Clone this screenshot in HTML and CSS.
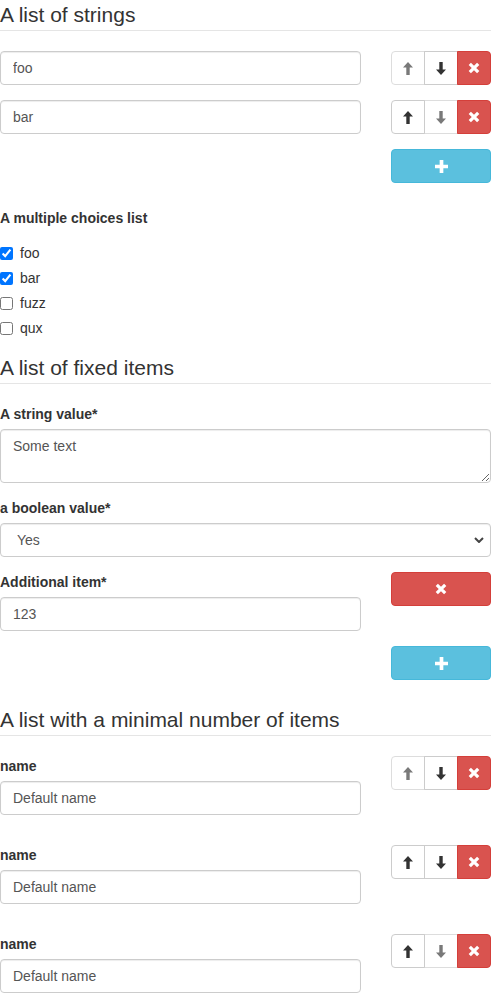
FILE: index.html
```html
<!DOCTYPE html>
<html>
<head>
<meta charset="utf-8">
<link rel="stylesheet" href="styles.css">
</head>
<body>
<div class="page">

  <section class="section">
    <div class="legend">A list of strings</div>
    <div class="array-item">
      <div class="item-main"><input class="form-control" type="text" value="foo"></div>
      <div class="btn-group">
        <button class="btn btn-default" disabled><svg class="ico-arrow" viewBox="0 0 10 13"><path d="M5 0 L10 5.4 L6.7 5.4 L6.7 13 L3.3 13 L3.3 5.4 L0 5.4 Z"/></svg></button>
        <button class="btn btn-default"><svg class="ico-arrow" viewBox="0 0 10 13"><path d="M5 13 L10 7.6 L6.7 7.6 L6.7 0 L3.3 0 L3.3 7.6 L0 7.6 Z"/></svg></button>
        <button class="btn btn-danger"><svg class="ico-x" viewBox="0 0 12 12"><path d="M1.8 1.8 L10.2 10.2 M10.2 1.8 L1.8 10.2"/></svg></button>
      </div>
    </div>
    <div class="array-item">
      <div class="item-main"><input class="form-control" type="text" value="bar"></div>
      <div class="btn-group">
        <button class="btn btn-default"><svg class="ico-arrow" viewBox="0 0 10 13"><path d="M5 0 L10 5.4 L6.7 5.4 L6.7 13 L3.3 13 L3.3 5.4 L0 5.4 Z"/></svg></button>
        <button class="btn btn-default" disabled><svg class="ico-arrow" viewBox="0 0 10 13"><path d="M5 13 L10 7.6 L6.7 7.6 L6.7 0 L3.3 0 L3.3 7.6 L0 7.6 Z"/></svg></button>
        <button class="btn btn-danger"><svg class="ico-x" viewBox="0 0 12 12"><path d="M1.8 1.8 L10.2 10.2 M10.2 1.8 L1.8 10.2"/></svg></button>
      </div>
    </div>
    <div class="array-add">
      <button class="btn btn-info btn-add"><svg class="ico-plus" viewBox="0 0 12 12"><path d="M6 0 V12 M0 6 H12"/></svg></button>
    </div>
  </section>

  <div class="field">
    <label class="control-label">A multiple choices list</label>
    <div class="checkboxes">
      <label class="checkbox"><input type="checkbox" checked><span>foo</span></label>
      <label class="checkbox"><input type="checkbox" checked><span>bar</span></label>
      <label class="checkbox"><input type="checkbox"><span>fuzz</span></label>
      <label class="checkbox"><input type="checkbox"><span>qux</span></label>
    </div>
  </div>

  <section class="section">
    <div class="legend">A list of fixed items</div>
    <div class="field">
      <label class="control-label">A string value*</label>
      <textarea class="form-control textarea">Some text</textarea>
    </div>
    <div class="field">
      <label class="control-label">a boolean value*</label>
      <div class="select-wrap">
        <select class="form-control select"><option>Yes</option><option>No</option></select>
        <svg class="chevron" viewBox="0 0 10 6"><path d="M1 1 L5 5 L9 1"/></svg>
      </div>
    </div>
    <div class="array-item">
      <div class="item-main">
        <label class="control-label">Additional item*</label>
        <input class="form-control" type="text" value="123">
      </div>
      <div class="btn-group">
        <button class="btn btn-danger"><svg class="ico-x" viewBox="0 0 12 12"><path d="M1.8 1.8 L10.2 10.2 M10.2 1.8 L1.8 10.2"/></svg></button>
      </div>
    </div>
    <div class="array-add">
      <button class="btn btn-info btn-add"><svg class="ico-plus" viewBox="0 0 12 12"><path d="M6 0 V12 M0 6 H12"/></svg></button>
    </div>
  </section>

  <section class="section">
    <div class="legend">A list with a minimal number of items</div>
    <div class="array-item obj-item">
      <div class="item-main">
        <label class="control-label">name</label>
        <input class="form-control" type="text" value="Default name">
      </div>
      <div class="btn-group">
        <button class="btn btn-default" disabled><svg class="ico-arrow" viewBox="0 0 10 13"><path d="M5 0 L10 5.4 L6.7 5.4 L6.7 13 L3.3 13 L3.3 5.4 L0 5.4 Z"/></svg></button>
        <button class="btn btn-default"><svg class="ico-arrow" viewBox="0 0 10 13"><path d="M5 13 L10 7.6 L6.7 7.6 L6.7 0 L3.3 0 L3.3 7.6 L0 7.6 Z"/></svg></button>
        <button class="btn btn-danger"><svg class="ico-x" viewBox="0 0 12 12"><path d="M1.8 1.8 L10.2 10.2 M10.2 1.8 L1.8 10.2"/></svg></button>
      </div>
    </div>
    <div class="array-item obj-item">
      <div class="item-main">
        <label class="control-label">name</label>
        <input class="form-control" type="text" value="Default name">
      </div>
      <div class="btn-group">
        <button class="btn btn-default"><svg class="ico-arrow" viewBox="0 0 10 13"><path d="M5 0 L10 5.4 L6.7 5.4 L6.7 13 L3.3 13 L3.3 5.4 L0 5.4 Z"/></svg></button>
        <button class="btn btn-default"><svg class="ico-arrow" viewBox="0 0 10 13"><path d="M5 13 L10 7.6 L6.7 7.6 L6.7 0 L3.3 0 L3.3 7.6 L0 7.6 Z"/></svg></button>
        <button class="btn btn-danger"><svg class="ico-x" viewBox="0 0 12 12"><path d="M1.8 1.8 L10.2 10.2 M10.2 1.8 L1.8 10.2"/></svg></button>
      </div>
    </div>
    <div class="array-item obj-item">
      <div class="item-main">
        <label class="control-label">name</label>
        <input class="form-control" type="text" value="Default name">
      </div>
      <div class="btn-group">
        <button class="btn btn-default"><svg class="ico-arrow" viewBox="0 0 10 13"><path d="M5 0 L10 5.4 L6.7 5.4 L6.7 13 L3.3 13 L3.3 5.4 L0 5.4 Z"/></svg></button>
        <button class="btn btn-default" disabled><svg class="ico-arrow" viewBox="0 0 10 13"><path d="M5 13 L10 7.6 L6.7 7.6 L6.7 0 L3.3 0 L3.3 7.6 L0 7.6 Z"/></svg></button>
        <button class="btn btn-danger"><svg class="ico-x" viewBox="0 0 12 12"><path d="M1.8 1.8 L10.2 10.2 M10.2 1.8 L1.8 10.2"/></svg></button>
      </div>
    </div>
  </section>

</div>
</body>
</html>
```

FILE: styles.css
```css
* { box-sizing: border-box; }
html, body { margin: 0; padding: 0; background: #fff; }
body {
  font-family: "Liberation Sans", Arial, sans-serif;
  font-size: 14px;
  line-height: 20px;
  color: #333;
}
.page { width: 491px; }

.legend {
  font-size: 21px;
  line-height: 30px;
  color: #333;
  border-bottom: 1px solid #e5e5e5;
  margin-bottom: 20px;
}

.array-item {
  display: grid;
  grid-template-columns: 1fr 100px;
  column-gap: 30px;
  align-items: start;
  margin-bottom: 15px;
}
.obj-item { margin-bottom: 30px; }
.obj-item:last-child { margin-bottom: 0; }
.item-main { min-width: 0; }

.array-add {
  display: flex;
  justify-content: flex-end;
  margin-bottom: 25px;
}

.field { margin-bottom: 15px; }

.control-label {
  display: block;
  font-weight: bold;
  line-height: 20px;
  margin-bottom: 5px;
}

.form-control {
  display: block;
  width: 100%;
  height: 34px;
  padding: 6px 12px;
  font-family: "Liberation Sans", Arial, sans-serif;
  font-size: 14px;
  line-height: 20px;
  color: #555;
  background: #fff;
  border: 1px solid #ccc;
  border-radius: 4px;
  box-shadow: inset 0 1px 1px rgba(0,0,0,.075);
  margin: 0;
  outline: none;
}
.textarea { height: 54px; resize: vertical; }

.select-wrap { position: relative; }
.select {
  appearance: none;
  -webkit-appearance: none;
  padding-left: 16px;
}
.chevron {
  position: absolute;
  right: 7px;
  top: 14px;
  width: 10px;
  height: 6px;
  fill: none;
  stroke: #444;
  stroke-width: 2;
}

.checkboxes { padding-top: 10px; }
.checkbox {
  display: block;
  position: relative;
  padding-left: 20px;
  min-height: 20px;
  line-height: 20px;
  margin-bottom: 5px;
  font-weight: normal;
}
.checkbox:last-child { margin-bottom: 0; }
.checkbox input {
  position: absolute;
  left: 0;
  top: 4px;
  width: 13px;
  height: 13px;
  margin: 0;
}

.btn-group { display: flex; }
.btn {
  flex: 1 1 0;
  height: 34px;
  padding: 6px 6px;
  border: 1px solid transparent;
  border-radius: 0;
  display: flex;
  align-items: center;
  justify-content: center;
  margin: 0;
  cursor: pointer;
}
.btn + .btn { margin-left: -1px; }
.btn:first-child { border-top-left-radius: 4px; border-bottom-left-radius: 4px; }
.btn:last-child { border-top-right-radius: 4px; border-bottom-right-radius: 4px; }
.btn-default { background: #fff; border-color: #ccc; color: #333; }
.btn-default[disabled] { opacity: .65; }
.btn-danger { background: #d9534f; border-color: #d43f3a; color: #fff; position: relative; }
.btn-info { background: #5bc0de; border-color: #46b8da; color: #fff; }
.btn-add { width: 100px; flex: none; border-radius: 4px; }

.ico-arrow { width: 10px; height: 13px; fill: currentColor; }
.ico-x { width: 12px; height: 12px; fill: none; stroke: #fff; stroke-width: 3.2; }
.ico-plus { width: 13px; height: 13px; fill: none; stroke: #fff; stroke-width: 3.4; }
```
